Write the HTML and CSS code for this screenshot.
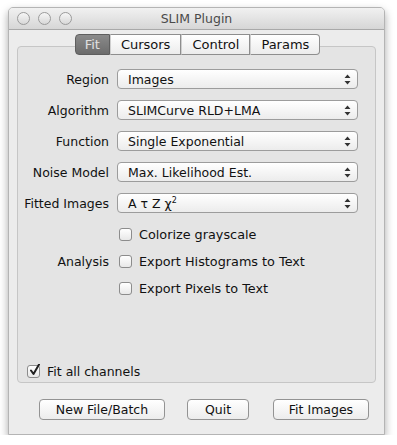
FILE: index.html
```html
<!DOCTYPE html>
<html lang="en">
<head>
  <meta charset="UTF-8">
  <title>SLIM Plugin</title>
  <link rel="stylesheet" href="styles.css">
</head>
<body>
  <div class="window">
    <div class="titlebar">
      <div class="lights">
        <span class="light"></span>
        <span class="light"></span>
        <span class="light"></span>
      </div>
      <div class="title">SLIM Plugin</div>
    </div>

    <div class="content">
      <!-- tabs sit over the top border of the panel -->
      <div class="tabs">
        <span class="tab selected">Fit</span>
        <span class="tab">Cursors</span>
        <span class="tab">Control</span>
        <span class="tab">Params</span>
      </div>

      <div class="panel">
        <div class="form">
          <label class="label">Region</label>
          <div class="select"><span>Images</span><svg class="arrows" width="7" height="11" viewBox="0 0 7 11"><path d="M3.5 0.5 L6.5 4 L0.5 4 Z M0.5 7 L6.5 7 L3.5 10.5 Z" fill="#333"/></svg></div>

          <label class="label">Algorithm</label>
          <div class="select"><span>SLIMCurve RLD+LMA</span><svg class="arrows" width="7" height="11" viewBox="0 0 7 11"><path d="M3.5 0.5 L6.5 4 L0.5 4 Z M0.5 7 L6.5 7 L3.5 10.5 Z" fill="#333"/></svg></div>

          <label class="label">Function</label>
          <div class="select"><span>Single Exponential</span><svg class="arrows" width="7" height="11" viewBox="0 0 7 11"><path d="M3.5 0.5 L6.5 4 L0.5 4 Z M0.5 7 L6.5 7 L3.5 10.5 Z" fill="#333"/></svg></div>

          <label class="label">Noise Model</label>
          <div class="select"><span>Max. Likelihood Est.</span><svg class="arrows" width="7" height="11" viewBox="0 0 7 11"><path d="M3.5 0.5 L6.5 4 L0.5 4 Z M0.5 7 L6.5 7 L3.5 10.5 Z" fill="#333"/></svg></div>

          <label class="label">Fitted Images</label>
          <div class="select"><span>A τ Z χ<sup>2</sup></span><svg class="arrows" width="7" height="11" viewBox="0 0 7 11"><path d="M3.5 0.5 L6.5 4 L0.5 4 Z M0.5 7 L6.5 7 L3.5 10.5 Z" fill="#333"/></svg></div>
        </div>

        <div class="analysis">
          <div class="label analysis-label">Analysis</div>
          <div class="checks">
            <div class="check"><span class="box"></span>Colorize grayscale</div>
            <div class="check"><span class="box"></span>Export Histograms to Text</div>
            <div class="check"><span class="box"></span>Export Pixels to Text</div>
          </div>
        </div>

        <div class="spacer"></div>

        <div class="check fit-all">
          <span class="box"><svg width="13" height="13" viewBox="0 0 13 13"><path d="M3 6.5 L5.5 10 L11 0.5" fill="none" stroke="#222" stroke-width="2" stroke-linecap="round" stroke-linejoin="round"/></svg></span>Fit all channels
        </div>
      </div>

      <div class="buttons">
        <button class="button btn-new">New File/Batch</button>
        <button class="button btn-quit">Quit</button>
        <button class="button btn-fit">Fit Images</button>
      </div>
    </div>
  </div>
</body>
</html>
```

FILE: styles.css
```css
body {
  margin: 0;
  background: #ffffff;
  font-family: "DejaVu Sans", sans-serif;
  font-size: 12.5px;
  color: #111;
}
.window {
  margin: 7px 0 0 8px;
  width: 377px;
  height: 428px;
  background: #ececec;
  border: 1px solid #b4b4b4;
  border-radius: 5px 5px 0 0;
  box-sizing: border-box;
  box-shadow: 0 4px 9px rgba(0, 0, 0, 0.35);
  overflow: hidden;
}
.titlebar {
  height: 21px;
  background: linear-gradient(#f1f1f1, #d6d6d6);
  border-bottom: 1px solid #a9a9a9;
  display: flex;
  align-items: center;
  position: relative;
}
.lights {
  display: flex;
  gap: 8px;
  padding-left: 8px;
}
.light {
  width: 11px;
  height: 11px;
  border-radius: 50%;
  border: 1px solid #9a9a9a;
  background: linear-gradient(#f6f6f6, #d8d8d8);
}
.title {
  position: absolute;
  left: 0;
  right: 0;
  text-align: center;
  color: #4a4a4a;
  font-size: 12.5px;
}
.content {
  padding: 4px 8px 0 8px;
}
.tabs {
  display: flex;
  justify-content: center;
  margin: 0 0 -9px 0;
  position: relative;
  z-index: 1;
  padding-left: 2px;
}
.tab {
  height: 19px;
  line-height: 19px;
  padding: 0 10px;
  background: linear-gradient(#ffffff, #ececec);
  border: 1px solid #8e8e8e;
  border-left: 1px solid #cfcfcf;
  font-size: 13px;
  color: #111;
}
.tab:first-child {
  border-left: 1px solid #6a6a6a;
  border-radius: 4px 0 0 4px;
}
.tab:last-child {
  border-radius: 0 4px 4px 0;
}
.tab.selected {
  background: linear-gradient(#8a8a8a, #6c6c6c);
  color: #e0e0e0;
  border-color: #5e5e5e;
  padding: 0 9px;
}
.panel {
  height: 337px;
  box-sizing: border-box;
  background: #e4e4e4;
  border: 1px solid #c6c6c6;
  border-radius: 4px;
  display: flex;
  flex-direction: column;
  padding: 22px 17px 0 0;
}
.form {
  display: grid;
  grid-template-columns: 91px 241px;
  column-gap: 8px;
  row-gap: 11px;
  align-items: center;
}
.label {
  text-align: right;
}
.select {
  height: 20px;
  box-sizing: border-box;
  border: 1px solid #9c9c9c;
  border-radius: 4px;
  background: linear-gradient(#ffffff, #ececec);
  display: flex;
  align-items: center;
  justify-content: space-between;
  padding: 0 6px 0 10px;
}
.select sup {
  font-size: 8px;
  vertical-align: 5px;
  line-height: 0;
}
.arrows {
  display: block;
}
.analysis {
  display: flex;
  align-items: center;
  gap: 10px;
  margin-top: 15px;
}
.analysis-label {
  width: 91px;
}
.checks {
  display: flex;
  flex-direction: column;
  gap: 14px;
  font-size: 12.8px;
}
.check {
  display: flex;
  align-items: center;
  height: 13px;
}
.box {
  width: 13px;
  height: 13px;
  box-sizing: border-box;
  border: 1px solid #8c8c8c;
  border-radius: 3px;
  background: linear-gradient(#ffffff, #e8e8e8);
  margin-right: 7px;
  position: relative;
}
.box svg {
  position: absolute;
  left: 0;
  top: -2px;
}
.spacer {
  flex: 1;
}
.fit-all {
  margin: 0 0 4px 9px;
}
.buttons {
  display: flex;
  padding: 16px 0 0 22px;
  gap: 22px;
}
.button {
  height: 21px;
  box-sizing: border-box;
  font-family: "DejaVu Sans", sans-serif;
  font-size: 12.5px;
  color: #111;
  background: linear-gradient(#ffffff, #ececec);
  border: 1px solid #939393;
  border-radius: 4px;
  padding: 0;
}
.btn-new {
  width: 126px;
}
.btn-quit {
  width: 62px;
}
.btn-fit {
  width: 96px;
  margin-left: 2px;
}
```
